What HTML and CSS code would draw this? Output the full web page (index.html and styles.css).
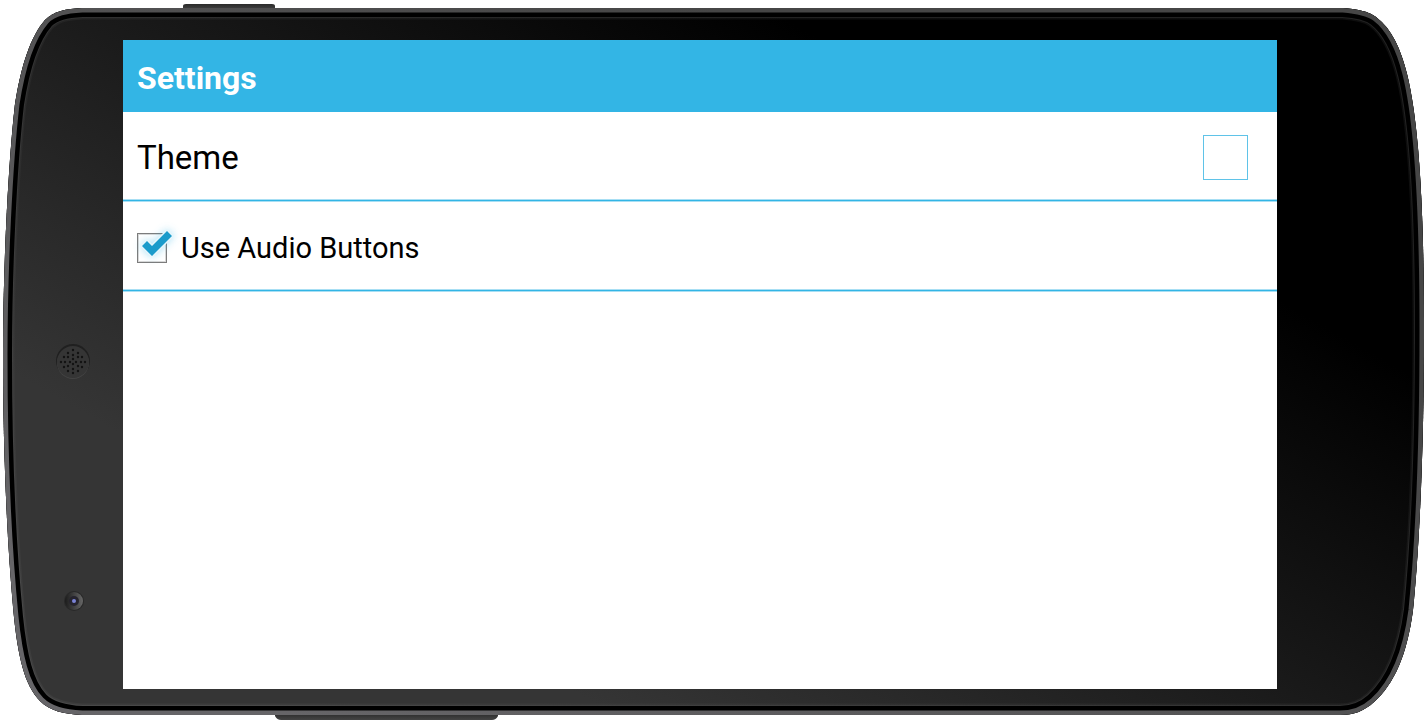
FILE: index.html
```html
<!DOCTYPE html>
<html lang="en">
  <head>
    <meta charset="utf-8">
    <meta name="viewport" content="width=device-width, initial-scale=1">
    <title>Settings</title>
    <link rel="stylesheet" href="styles.css">
  </head>

  <body>
    <div class="phone">
        <!-- phone body -->
        <svg class="phone__frame" viewBox="0 0 1426 722" preserveAspectRatio="none" aria-hidden="true">
            <defs>
                <linearGradient id="glass" gradientUnits="userSpaceOnUse" x1="60" y1="400" x2="400" y2="-199">
                    <stop offset="0" stop-color="#353535"/>
                    <stop offset="1" stop-color="#000"/>
                </linearGradient>
                <linearGradient id="rim" gradientUnits="userSpaceOnUse" x1="300" y1="722" x2="700" y2="0">
                    <stop offset="0" stop-color="#666568"/>
                    <stop offset="1" stop-color="#464646"/>
                </linearGradient>
                <linearGradient id="shine" gradientUnits="userSpaceOnUse" x1="300" y1="722" x2="700" y2="0">
                    <stop offset="0" stop-color="#484848"/>
                    <stop offset="1" stop-color="#222"/>
                </linearGradient>
                <linearGradient id="key" x1="0" y1="0" x2="0" y2="1">
                    <stop offset="0" stop-color="#2a2a2a"/>
                    <stop offset="1" stop-color="#444"/>
                </linearGradient>
                <linearGradient id="lens" x1="0" y1="0" x2="1" y2="0">
                    <stop offset="0" stop-color="#1c1c1c"/>
                    <stop offset="1" stop-color="#666"/>
                </linearGradient>
                <path id="body" d="M82 8 H1343 C1356 9 1368 11 1376 17 C1392 29 1401 50 1407 74 C1419 122 1424 210 1424 330 C1424 440 1420 540 1413 610 C1407 655 1394 684 1374 702 C1364 711 1354 715 1340 715 H82 C64 714 50 711 40 701 C24 685 18 655 14 617 C7 545 3 450 3 355 C3 270 8 165 15 104 C21 65 31 36 45 20 C54 11 66 9 82 8 Z"/>
                <clipPath id="body-clip"><use href="#body"/></clipPath>
            </defs>
            <path d="M183 10 V6 Q183 4 186 4 H272 Q275 4 275 6 V10 Z" fill="url(#key)"/>
            <path d="M275 713 V716 Q277 720 281 720 H492 Q496 720 498 716 V713 Z" fill="url(#key)"/>
            <g clip-path="url(#body-clip)">
                <use href="#body" fill="url(#glass)"/>
                <use href="#body" fill="none" stroke="url(#shine)" stroke-width="23" opacity="0.4"/>
                <use href="#body" fill="none" stroke="url(#shine)" stroke-width="20"/>
                <use href="#body" fill="none" stroke="#000" stroke-width="18"/>
                <use href="#body" fill="none" stroke="url(#rim)" stroke-width="9"/>
            </g>

            <!-- speaker -->
            <circle cx="73" cy="361" r="17" fill="#202020"/>
            <circle cx="73" cy="363" r="16" fill="#444"/>
            <circle cx="73" cy="362" r="16" fill="#353535"/>
            <g fill="none" stroke="#141414" stroke-width="2.4" stroke-linecap="round">
                <path d="M73 350h0M73 355h0M73 359h0M73 364h0M73 369h0M73 373h0"/>
                <path d="M68 353h0M68 357h0M70 362h0M68 366h0M68 371h0"/>
                <path d="M78 353h0M78 357h0M76 362h0M78 366h0M78 371h0"/>
                <path d="M64 357h0M65 362h0M64 367h0M82 357h0M81 362h0M82 367h0M61 362h0M85 362h0"/>
            </g>

            <!-- camera -->
            <circle cx="74" cy="601" r="10" fill="#282828"/>
            <circle cx="74" cy="601" r="9" fill="url(#lens)"/>
            <circle cx="74" cy="601" r="5" fill="#26242e"/>
            <circle cx="74" cy="601" r="2" fill="#7b83d6"/>
        </svg>

        <main class="screen">
            <header class="screen__header">
                <h1 class="screen__title">Settings</h1>
            </header>
            <ul class="settings">
                <li class="settings__item">
                    <span class="settings__name" id="theme">Theme</span>
                    <button type="button" class="settings__color" aria-labelledby="theme"></button>
                </li>
                <li class="settings__item">
                    <span class="check">
                        <input type="checkbox" class="check__box" id="audio" checked>
                        <svg class="check__mark" viewBox="0 0 40 36" aria-hidden="true">
                            <path d="M5 16 L10 11 L15 16 L30 1 L35 6 L15 26 Z" fill="none" stroke="#e6f6fc" stroke-width="3"/>
                            <path d="M5 16 L10 11 L15 16 L30 1 L35 6 L15 26 Z" fill="#1a9bcb"/>
                        </svg>
                    </span>
                    <label class="settings__label" for="audio">Use Audio Buttons</label>
                </li>
            </ul>
        </main>
    </div>
  </body>
</html>
```

FILE: styles.css
```css
* {
    box-sizing: border-box;
}
body {
    margin: 0;
    font-family: Roboto, "Liberation Sans", sans-serif;
    color: #000;
    background-color: #fff;
}
.phone {
    position: relative;
    display: flex;
    min-height: 100vh;
    padding: 40px 149px 33px 123px;
}
.phone__frame {
    position: absolute;
    top: 0;
    left: 0;
    width: 100%;
    height: 100%;
}

.screen {
    position: relative;
    flex: 1;
    background-color: #fff;
}
.screen__header {
    display: flex;
    align-items: center;
    height: 71px;
    padding: 4px 14px 0;
    background-color: #33b5e5;
    box-shadow: 0 1px #33b5e5;
}
.screen__title {
    margin: 0;
    font-size: 32px;
    font-weight: bold;
    color: #fff;
}

.settings {
    margin: 0;
    padding: 0;
    list-style-type: none;
}
.settings__item {
    display: flex;
    align-items: center;
    height: 90px;
    padding: 4px 29px 0 14px;
    border-bottom: 1px solid #33b5e5;
    box-shadow: 0 1px #a8dff4, inset 0 -1px #a8dff4;
}
.settings__name {
    font-size: 33px;
}
.settings__label {
    margin-left: 14px;
    font-size: 29px;
}
.settings__color {
    width: 45px;
    height: 45px;
    margin-left: auto;
    padding: 0;
    border: 1px solid #5fc3e8;
    background-color: #fff;
}

.check {
    position: relative;
    display: flex;
}
.check__box {
    width: 30px;
    height: 30px;
    margin: 0;
    border: 1px solid #7c7c7c;
    background-color: #fff;
    box-shadow: inset 0 0 0 1px #d8d8d8;
    appearance: none;
}
.check__mark {
    display: none;
    position: absolute;
    top: -3px;
    left: 0;
    width: 40px;
    height: 36px;
    overflow: visible;
    pointer-events: none;
    filter: drop-shadow(0 0 4px rgba(51, 181, 229, 0.4));
}
.check__box:checked + .check__mark {
    display: block;
}
```
